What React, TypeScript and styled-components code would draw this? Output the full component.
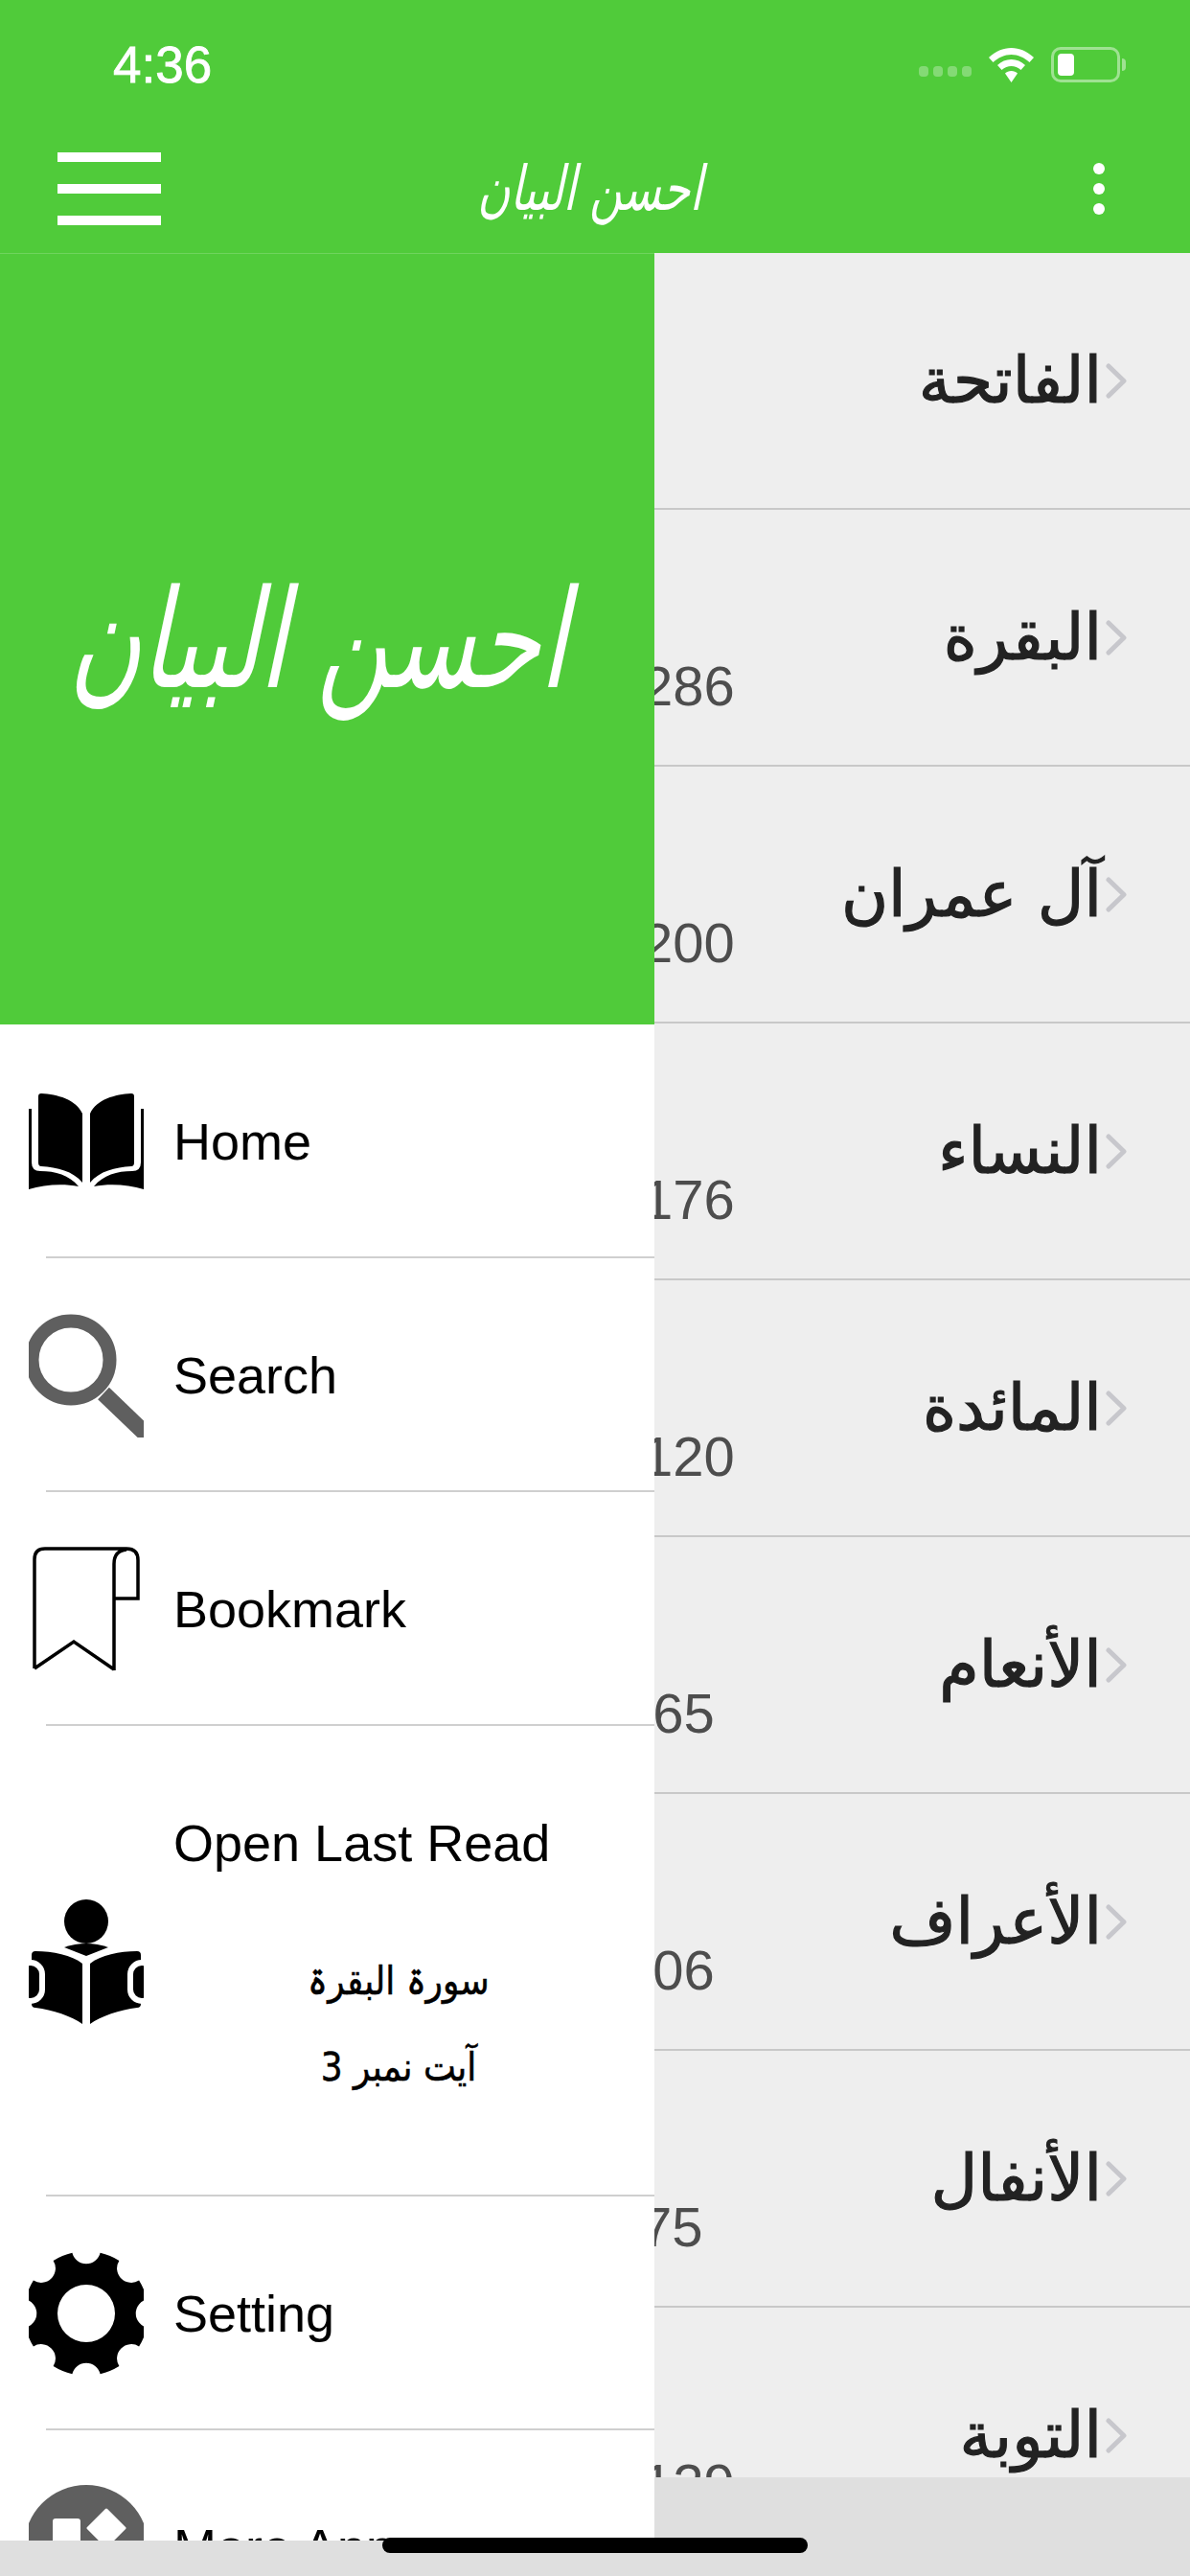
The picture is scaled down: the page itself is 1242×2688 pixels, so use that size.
// react
import {
    memo,
} from 'react';
// styled-components
import styled, { createGlobalStyle } from 'styled-components';

const GREEN = '#50cb3a';
const ARABIC_FONT = '"DejaVu Sans", "Noto Sans", sans-serif';
const LATIN_FONT = '"Liberation Sans", Arial, sans-serif';

const GlobalStyle = createGlobalStyle`
    html, body {
        margin: 0;
        padding: 0;
        background: #dfdfdf;
    }
`;

const StyledPage = styled.div`
    position: relative;
    display: flex;
    flex-direction: column;
    width: 1242px;
    height: 2688px;
    overflow: hidden;
    font-family: ${LATIN_FONT};
`;

const StyledHeader = styled.header`
    flex: none;
    height: 264px;
    background: ${GREEN};
`;

const StyledStatusBar = styled.div`
    display: flex;
    align-items: center;
    justify-content: space-between;
    height: 135px;
    padding: 0 73px 0 118px;
    box-sizing: border-box;
`;

const StyledTime = styled.span`
    font-size: 53px;
    line-height: 1;
    color: #fff;
    -webkit-text-stroke: 0.8px #fff;
`;

const StyledStatusIcons = styled.div`
    display: flex;
    align-items: center;
    gap: 18px;
`;

const StyledSignal = styled.div`
    display: flex;
    gap: 5px;
    align-self: flex-end;
    margin-bottom: 6px;
    span {
        width: 10px;
        height: 11px;
        border-radius: 4px;
        background: rgba(255, 255, 255, 0.3);
    }
`;

const StyledBattery = styled.div`
    position: relative;
    width: 72px;
    height: 37px;
    box-sizing: border-box;
    padding: 4px;
    border: 3px solid rgba(255, 255, 255, 0.45);
    border-radius: 10px;
    &::after {
        content: '';
        position: absolute;
        top: 9px;
        right: -9px;
        width: 4px;
        height: 13px;
        border-radius: 0 4px 4px 0;
        background: rgba(255, 255, 255, 0.45);
    }
    span {
        display: block;
        width: 17px;
        height: 100%;
        border-radius: 4px;
        background: #fff;
    }
`;

const StyledNavBar = styled.div`
    display: grid;
    grid-template-columns: 1fr auto 1fr;
    align-items: center;
    height: 129px;
    padding: 0 89px 6px 60px;
    box-sizing: border-box;
`;

const StyledBurger = styled.div`
    display: flex;
    flex-direction: column;
    gap: 23px;
    width: 108px;
    span {
        height: 10px;
        background: #fff;
    }
`;

const StyledNavTitle = styled.div`
    margin-left: 28px;
    font-family: ${ARABIC_FONT};
    font-size: 46px;
    line-height: 76px;
    color: #fff;
    transform: skewX(-12deg) scaleY(1.4);
`;

const StyledDots = styled.div`
    display: flex;
    flex-direction: column;
    justify-self: end;
    gap: 9px;
    span {
        width: 12px;
        height: 12px;
        border-radius: 50%;
        background: #fff;
    }
`;

const StyledBody = styled.main`
    flex: 1;
    min-height: 0;
    overflow: hidden;
    background: #eeeeee;
`;

const StyledSuraRow = styled.div<{ $countLeft: number }>`
    display: flex;
    justify-content: space-between;
    height: 268px;
    box-sizing: border-box;
    padding: 0 66px 0 ${(p) => p.$countLeft}px;
    border-bottom: 2px solid #c8c8c8;
`;

const StyledCount = styled.span`
    align-self: flex-end;
    margin-bottom: 53px;
    font-size: 58px;
    line-height: 58px;
    color: #4d4d4d;
`;

const StyledSuraTitle = styled.div`
    display: flex;
    align-items: center;
    gap: 4px;
    font-family: ${ARABIC_FONT};
    font-size: 67px;
    color: #222;
    -webkit-text-stroke: 1.2px #222;
    svg {
        flex: none;
    }
`;

const StyledFooter = styled.footer`
    flex: none;
    height: 103px;
    background: #dfdfdf;
`;

const StyledDrawer = styled.aside`
    position: absolute;
    top: 264px;
    left: 0;
    display: flex;
    flex-direction: column;
    width: 683px;
    height: 2387px;
    overflow: hidden;
    background: #fff;
`;

const StyledDrawerBanner = styled.div`
    flex: none;
    display: flex;
    align-items: center;
    justify-content: center;
    height: 805px;
    box-sizing: border-box;
    border-top: 1px solid #6fd45d;
    background: ${GREEN};
    color: #fff;
    font-family: ${ARABIC_FONT};
    font-size: 102px;
`;

const StyledBannerTitle = styled.span`
    display: block;
    transform: skewX(-12deg) scaleY(1.4);
`;

const StyledMenuRow = styled.div<{ $height: number }>`
    flex: none;
    position: relative;
    display: flex;
    align-items: center;
    gap: 31px;
    height: ${(p) => p.$height}px;
    padding-left: 30px;
    box-sizing: border-box;
    color: #000;
    font-size: 54px;
    &::after {
        content: '';
        position: absolute;
        left: 48px;
        right: 0;
        bottom: 0;
        height: 2px;
        background: #cfcfcf;
    }
    &:last-child::after {
        display: none;
    }
`;

const StyledIconSlot = styled.div`
    flex: none;
    display: flex;
    justify-content: center;
    width: 120px;
`;

const StyledLastRead = styled.div`
    display: flex;
    flex-direction: column;
    width: 470px;
`;

const StyledUrduLine = styled.div`
    text-align: center;
    font-family: ${ARABIC_FONT};
    font-size: 36px;
    line-height: 90px;
    -webkit-text-stroke: 0.5px #000;
    transform: scaleY(1.15);
    &:first-of-type {
        margin-top: 68px;
    }
`;

const StyledHomeIndicator = styled.div`
    position: absolute;
    left: 399px;
    bottom: 24px;
    width: 444px;
    height: 16px;
    border-radius: 8px;
    background: #000;
`;

const SURAS = [
    { title: 'الفاتحة', count: '7', left: 640 },
    { title: 'البقرة', count: '286', left: 670 },
    { title: 'آل عمران', count: '200', left: 670 },
    { title: 'النساء', count: '176', left: 670 },
    { title: 'المائدة', count: '120', left: 670 },
    { title: 'الأنعام', count: '165', left: 649 },
    { title: 'الأعراف', count: '206', left: 649 },
    { title: 'الأنفال', count: '75', left: 669 },
    { title: 'التوبة', count: '129', left: 670 },
];

// 8 teeth round a hole, notches on the axes and the diagonals
function gearPath() {
    const radius = 65;
    const point = (deg: number) => {
        const rad = (deg * Math.PI) / 180;
        return `${(60 + radius * Math.cos(rad)).toFixed(1)} ${(65 + radius * Math.sin(rad)).toFixed(1)}`;
    };
    let d = `M${point(13)}`;
    for (let i = 0; i < 8; i += 1) {
        const start = i * 45;
        d += ` A${radius} ${radius} 0 0 1 ${point(start + 32)}`;
        d += ` A15 15 0 0 0 ${point(start + 58)}`;
    }
    return `${d} Z M90 65 A30 30 0 1 0 30 65 A30 30 0 1 0 90 65 Z`;
}

function Chevron() {
    return (
        <svg width="22" height="37" viewBox="0 0 22 37">
            <path d="M3 3 L19 18.5 L3 34" fill="none" stroke="#c7c7cc" strokeWidth="5" strokeLinecap="round" strokeLinejoin="round" />
        </svg>
    );
}

function WifiIcon() {
    return (
        <svg width="47" height="36" viewBox="0 0 47 36">
            <path d="M23.5 0 C32 0 40 3.500 47 10 L42.500 15 C37 10 30.500 7 23.500 7 C16.500 7 10 10 4.500 15 L0 10 C7 3.500 15 0 23.500 0 Z" fill="#fff" />
            <path d="M23.500 12 C29 12 34 14 38 18 L33.500 23 C30.500 20.500 27 19 23.500 19 C20 19 16.500 20.500 13.500 23 L9 18 C13 14 18 12 23.500 12 Z" fill="#fff" />
            <path d="M23.500 24 C26 24 28.500 25 30 26.500 L23.500 36 L17 26.500 C18.500 25 21 24 23.500 24 Z" fill="#fff" />
        </svg>
    );
}

function BookHalf() {
    return (
        <>
            <path d="M13 0 C30 1 49 6 56 21 V93 C46 81 30 77 13 76 Q10 76 10 72 V3 Q10 0 13 0 Z" />
            <path d="M0 16 H3 V72 Q3 81 12 81 C28 81 42 85 52 97 C36 94 16 95 0 100 Z" />
        </>
    );
}

function BookIcon() {
    return (
        <svg width="120" height="100" viewBox="0 0 120 100">
            <BookHalf />
            <g transform="matrix(-1 0 0 1 120 0)">
                <BookHalf />
            </g>
        </svg>
    );
}

function SearchIcon() {
    return (
        <svg width="120" height="130" viewBox="0 0 120 130">
            <circle cx="44" cy="49" r="40.500" fill="none" stroke="#5f5f5f" strokeWidth="14" />
            <path d="M78 84 L128 132" fill="none" stroke="#5f5f5f" strokeWidth="17" />
        </svg>
    );
}

function BookmarkIcon() {
    return (
        <svg width="112" height="131" viewBox="0 0 112 131">
            <path
                d="M2 127 V13 Q2 2 13 2 H98 Q110 2 110 14 V54 H85 M85 129 V18 Q85 4 98 3 M2 127 L43 99 L85 128"
                fill="none"
                stroke="#000"
                strokeWidth="3.500" />
        </svg>
    );
}

function ReaderHalf() {
    return (
        <>
            <path d="M7 54 C25 54 45 58 56 67 V130 C45 122 25 115 7 113 Q3 113 3 109 V58 Q3 54 7 54 Z" />
            <rect x="-10" y="66" width="24" height="40" rx="12" fill="#000" stroke="#fff" strokeWidth="6" />
        </>
    );
}

function ReaderIcon() {
    return (
        <svg width="120" height="130" viewBox="0 0 120 130">
            <ellipse cx="60" cy="23" rx="23" ry="23" />
            <path d="M37 50 Q60 42 83 50 L60 59 Z" />
            <ReaderHalf />
            <g transform="matrix(-1 0 0 1 120 0)">
                <ReaderHalf />
            </g>
        </svg>
    );
}

function GearIcon() {
    return (
        <svg width="120" height="130" viewBox="0 0 120 130">
            <path d={gearPath()} fillRule="evenodd" />
        </svg>
    );
}

function MoreAppsIcon() {
    return (
        <svg width="120" height="130" viewBox="0 0 120 130">
            <circle cx="60" cy="65" r="65" fill="#5f5f5f" />
            <rect x="25" y="35" width="29" height="29" rx="3" fill="#fff" />
            <path d="M81 26 L100 45 L81 64 L62 45 Z" fill="#fff" stroke="#fff" strokeWidth="3" strokeLinejoin="round" />
            <rect x="25" y="72" width="29" height="29" rx="3" fill="#fff" />
            <rect x="66" y="72" width="29" height="29" rx="3" fill="#fff" />
        </svg>
    );
}

type TMenuRowProps = {
    icon: React.ReactNode;
    label: string;
};

function MenuRow(props: TMenuRowProps) {
    const {
        icon,
        label,
    } = props;

    return (
        <StyledMenuRow $height={244}>
            <StyledIconSlot>{icon}</StyledIconSlot>
            <span>{label}</span>
        </StyledMenuRow>
    );
}

function App() {
    return (
        <StyledPage>
            <GlobalStyle />

            <StyledHeader>
                <StyledStatusBar>
                    <StyledTime>4:36</StyledTime>
                    <StyledStatusIcons>
                        <StyledSignal>
                            <span />
                            <span />
                            <span />
                            <span />
                        </StyledSignal>
                        <WifiIcon />
                        <StyledBattery>
                            <span />
                        </StyledBattery>
                    </StyledStatusIcons>
                </StyledStatusBar>
                <StyledNavBar>
                    <StyledBurger>
                        <span />
                        <span />
                        <span />
                    </StyledBurger>
                    <StyledNavTitle>احسن البیان</StyledNavTitle>
                    <StyledDots>
                        <span />
                        <span />
                        <span />
                    </StyledDots>
                </StyledNavBar>
            </StyledHeader>

            <StyledBody>
                {SURAS.map((sura) => (
                    <StyledSuraRow key={sura.title} $countLeft={sura.left}>
                        <StyledCount>{sura.count}</StyledCount>
                        <StyledSuraTitle>
                            <span>{sura.title}</span>
                            <Chevron />
                        </StyledSuraTitle>
                    </StyledSuraRow>
                ))}
            </StyledBody>

            <StyledFooter />

            <StyledDrawer>
                <StyledDrawerBanner>
                    <StyledBannerTitle>احسن البیان</StyledBannerTitle>
                </StyledDrawerBanner>
                <MenuRow icon={<BookIcon />} label="Home" />
                <MenuRow icon={<SearchIcon />} label="Search" />
                <MenuRow icon={<BookmarkIcon />} label="Bookmark" />
                <StyledMenuRow $height={491}>
                    <StyledIconSlot><ReaderIcon /></StyledIconSlot>
                    <StyledLastRead>
                        <span>Open Last Read</span>
                        <StyledUrduLine>سورۃ البقرۃ</StyledUrduLine>
                        <StyledUrduLine>آیت نمبر 3</StyledUrduLine>
                    </StyledLastRead>
                </StyledMenuRow>
                <MenuRow icon={<GearIcon />} label="Setting" />
                <MenuRow icon={<MoreAppsIcon />} label="More Apps" />
            </StyledDrawer>

            <StyledHomeIndicator />
        </StyledPage>
    );
}

export default memo(App);
